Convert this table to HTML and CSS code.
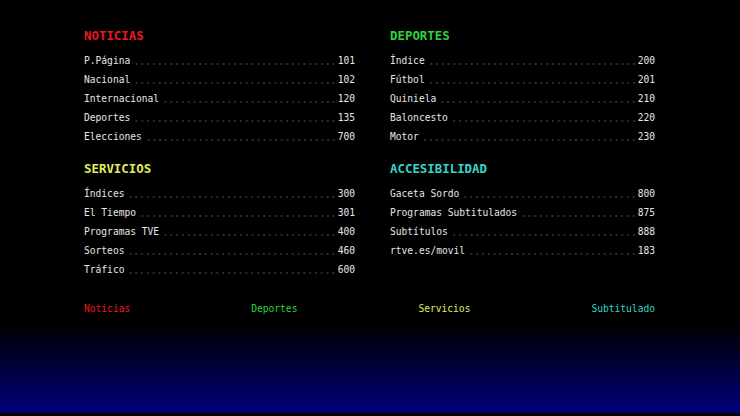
FILE: index.html
```html
<!DOCTYPE html>
<html lang="es">
<head>
<meta charset="utf-8">
<title>Teletexto</title>
<link rel="stylesheet" href="styles.css">
</head>
<body>
<main class="page">
  <div class="grid">
    <section class="sec">
      <h2 class="title red">NOTICIAS</h2>
      <ul class="list">
        <li class="row"><span>P.Página</span><span class="lead"></span><span>101</span></li>
        <li class="row"><span>Nacional</span><span class="lead"></span><span>102</span></li>
        <li class="row"><span>Internacional</span><span class="lead"></span><span>120</span></li>
        <li class="row"><span>Deportes</span><span class="lead"></span><span>135</span></li>
        <li class="row"><span>Elecciones</span><span class="lead"></span><span>700</span></li>
      </ul>
    </section>
    <section class="sec">
      <h2 class="title green">DEPORTES</h2>
      <ul class="list">
        <li class="row"><span>Índice</span><span class="lead"></span><span>200</span></li>
        <li class="row"><span>Fútbol</span><span class="lead"></span><span>201</span></li>
        <li class="row"><span>Quiniela</span><span class="lead"></span><span>210</span></li>
        <li class="row"><span>Baloncesto</span><span class="lead"></span><span>220</span></li>
        <li class="row"><span>Motor</span><span class="lead"></span><span>230</span></li>
      </ul>
    </section>
    <section class="sec">
      <h2 class="title yellow">SERVICIOS</h2>
      <ul class="list">
        <li class="row"><span>Índices</span><span class="lead"></span><span>300</span></li>
        <li class="row"><span>El Tiempo</span><span class="lead"></span><span>301</span></li>
        <li class="row"><span>Programas TVE</span><span class="lead"></span><span>400</span></li>
        <li class="row"><span>Sorteos</span><span class="lead"></span><span>460</span></li>
        <li class="row"><span>Tráfico</span><span class="lead"></span><span>600</span></li>
      </ul>
    </section>
    <section class="sec">
      <h2 class="title cyan">ACCESIBILIDAD</h2>
      <ul class="list">
        <li class="row"><span>Gaceta Sordo</span><span class="lead"></span><span>800</span></li>
        <li class="row"><span>Programas Subtitulados</span><span class="lead"></span><span>875</span></li>
        <li class="row"><span>Subtítulos</span><span class="lead"></span><span>888</span></li>
        <li class="row"><span>rtve.es/movil</span><span class="lead"></span><span>183</span></li>
      </ul>
    </section>
  </div>
  <nav class="foot">
    <span class="red">Noticias</span>
    <span class="green">Deportes</span>
    <span class="yellow">Servicios</span>
    <span class="cyan">Subtitulado</span>
  </nav>
</main>
</body>
</html>
```
FILE: styles.css
```css
html, body {
  margin: 0;
  padding: 0;
  height: 100%;
}
body {
  background: linear-gradient(to bottom, #000 0, #000 324px, #000030 360px, #00007a 412px, #000 414px);
  color: #e6e6e6;
  font-family: "DejaVu Sans Mono", "Liberation Mono", monospace;
  overflow: hidden;
}
.page {
  padding: 28px 0 0 84px;
  width: 571px;
}
.grid {
  display: grid;
  grid-template-columns: 271px 265px;
  column-gap: 35px;
  row-gap: 15.5px;
}
.title {
  margin: 0 0 6.5px;
  font-size: 12.4px;
  line-height: 16px;
  font-weight: bold;
}
.list {
  list-style: none;
  margin: 0;
  padding: 0;
}
.row {
  display: flex;
  font-size: 9.6px;
  line-height: 19px;
  height: 19px;
}
.lead {
  flex: 1;
  margin: 0 1px 0 4px;
  background-image: radial-gradient(circle, #4c4c4c 0.55px, transparent 0.9px);
  background-size: 5.8px 2px;
  background-repeat: repeat-x;
  background-position: right 0 bottom 5px;
}
.red { color: #ea1820; }
.green { color: #2fd23c; }
.yellow { color: #e2ec5c; }
.cyan { color: #36d4ca; }
.foot {
  display: flex;
  justify-content: space-between;
  margin-top: 23.5px;
  font-size: 9.6px;
  line-height: 14px;
}
```
